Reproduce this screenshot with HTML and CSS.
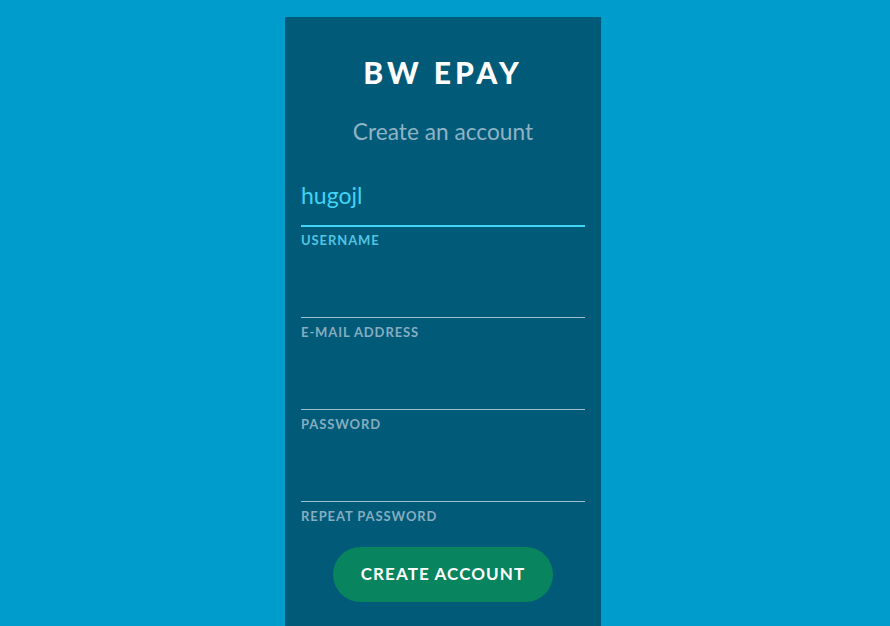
FILE: index.html
```html
<!DOCTYPE html>
<html>
<head>
<meta charset="utf-8">
<link rel="stylesheet" href="styles.css">
</head>
<body>
<div class="page">
  <form class="card">
    <h1 class="title">BW EPAY</h1>
    <p class="subtitle">Create an account</p>
    <div class="field field-active">
      <div class="input">hugojl</div>
      <label class="label">USERNAME</label>
    </div>
    <div class="field">
      <div class="input"></div>
      <label class="label">E-MAIL ADDRESS</label>
    </div>
    <div class="field">
      <div class="input"></div>
      <label class="label">PASSWORD</label>
    </div>
    <div class="field">
      <div class="input"></div>
      <label class="label">REPEAT PASSWORD</label>
    </div>
    <div class="actions">
      <button type="button" class="btn">CREATE ACCOUNT</button>
    </div>
  </form>
</div>
</body>
</html>
```

FILE: styles.css
```css
html, body {
  margin: 0;
  padding: 0;
  height: 100%;
  background: #009ccb;
  font-family: Lato, "Noto Sans", sans-serif;
  overflow: hidden;
}
.page {
  display: flex;
  justify-content: center;
  padding: 17px 4px 0 0;
}
.card {
  width: 316px;
  box-sizing: border-box;
  background: #025a79;
  padding: 37px 16px 40px;
  min-height: 640px;
}
.title {
  margin: 0;
  text-align: center;
  color: #ffffff;
  font-size: 30px;
  line-height: 36px;
  font-weight: 900;
  letter-spacing: 4px;
}
.subtitle {
  margin: 28px 0 0;
  text-align: center;
  color: #8fb3c4;
  font-size: 22.7px;
  line-height: 27px;
  font-weight: 400;
}
.field {
  margin-top: 25px;
}
.field-active {
  margin-top: 36px;
}
.input {
  box-sizing: border-box;
  height: 45px;
  padding: 0 0 16px;
  display: flex;
  align-items: flex-end;
  border-bottom: 1px solid #9cbfcd;
  color: #40d4f6;
  font-size: 23px;
  line-height: 27px;
}
.field-active .input {
  border-bottom-color: #40d4f6;
  box-shadow: 0 1px 0 #40d4f6;
}
.label {
  display: block;
  margin-top: 6px;
  color: #86adbf;
  font-size: 13px;
  line-height: 16px;
  font-weight: 700;
  letter-spacing: 0.9px;
}
.field-active .label {
  color: #52c3e1;
}
.actions {
  display: flex;
  justify-content: center;
  margin-top: 23px;
}
.btn {
  width: 220px;
  height: 55px;
  border: none;
  border-radius: 28px;
  background: #08845e;
  color: #ffffff;
  font-family: Lato, "Noto Sans", sans-serif;
  font-size: 17px;
  font-weight: 700;
  letter-spacing: 1.1px;
  padding: 0 0 2px;
}
```
